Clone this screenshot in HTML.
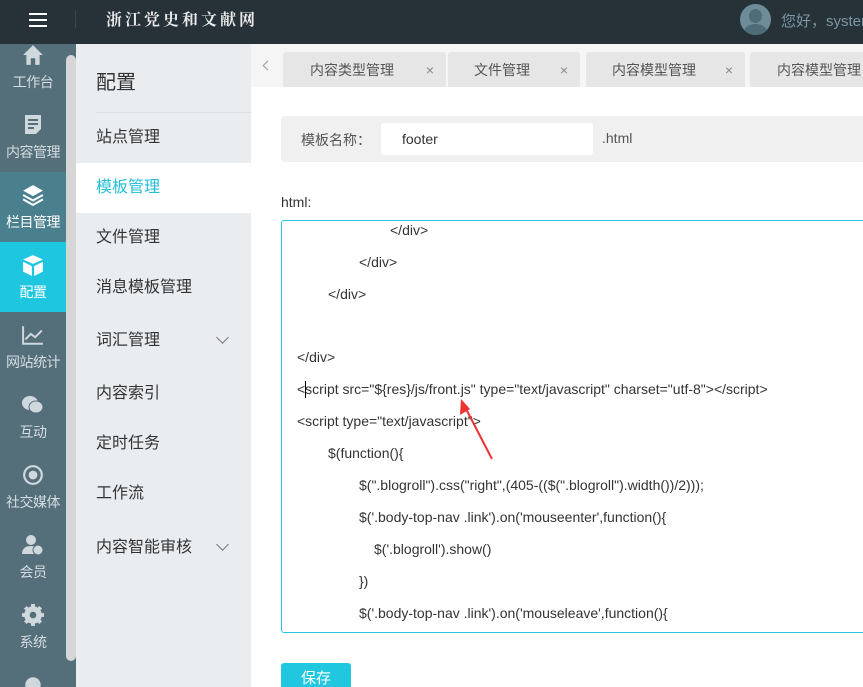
<!DOCTYPE html>
<html style="width:863px;height:687px;overflow:hidden"><head><meta charset="utf-8"><style>
*{margin:0;padding:0;box-sizing:border-box}
body{width:863px;height:687px;overflow:hidden;position:relative;background:#fff;font-family:"Liberation Sans","Noto Sans CJK SC",sans-serif}
#w{position:absolute;left:0;top:0;width:863px;height:687px;overflow:hidden}
.top{position:absolute;left:0;top:0;width:863px;height:44px;background:#263238;overflow:hidden}
.side{position:absolute;left:0;top:44px;width:76px;height:643px;background:#546e7a;overflow:hidden}
.thumb{position:absolute;left:66px;top:55px;width:10px;height:606px;background:#d6d6d6;border-radius:5px}
.it{position:absolute;left:0;width:66px;height:70px;color:#d5dde1;font-size:14px;text-align:center}
.it span{position:absolute;left:0;right:0;top:40px;white-space:nowrap;letter-spacing:-0.5px}
.it svg{position:absolute;left:22px;top:12px;width:22px;height:22px}
.menu{position:absolute;left:76px;top:44px;width:175px;height:643px;background:#eaedf0}
.menu .h{position:absolute;left:20px;top:22px;font-size:20px;color:#333}
.menu .ln{position:absolute;left:19px;top:68px;width:156px;height:1px;background:#dde1e4}
.mi{position:absolute;left:0;width:175px;height:50px;line-height:50px;padding-left:20px;font-size:16px;color:#333}
.mi i{position:absolute;right:24px;top:17px;width:9px;height:9px;border-right:1.3px solid #777;border-bottom:1.3px solid #777;transform:rotate(45deg)}
.tabs{position:absolute;left:251px;top:44px;width:612px;height:43px;background:#f5f5f5;overflow:hidden}
.tab{position:absolute;top:8px;height:35px;background:#e6e6e6;border-radius:3px 3px 0 0;font-size:14px;color:#555;line-height:36px}
.tab b{position:absolute;right:12px;top:0;font-weight:normal;color:#888;font-size:14px}
.main{position:absolute;left:251px;top:87px;width:612px;height:600px;overflow:hidden}
.code div{position:absolute;font-size:14px;color:#333;white-space:nowrap}
</style></head><body><div id="w">
<div class="top">
 <div style="position:absolute;left:29px;top:13px;width:18px;height:2px;background:#fff;box-shadow:0 6px 0 #fff,0 12px 0 #fff"></div>
 <div style="position:absolute;left:75px;top:10px;width:1px;height:18px;background:#3a464d"></div>
 <div style="position:absolute;left:106px;top:7px;font-family:'Noto Serif CJK SC',serif;font-weight:bold;color:#e8e8e8;font-size:16px;letter-spacing:3px">浙江党史和文献网</div>
 <div style="position:absolute;left:740px;top:4px;width:31px;height:31px;border-radius:50%;background:#6e8b98;overflow:hidden"><div style="position:absolute;left:9px;top:5px;width:13px;height:14px;border-radius:50%;background:#4e6b78"></div><div style="position:absolute;left:4px;top:20px;width:23px;height:16px;border-radius:50% 50% 0 0;background:#4e6b78"></div></div>
 <div style="position:absolute;left:781px;top:10px;color:#7d96a2;font-size:15px;white-space:nowrap">您好，system</div>
</div>
<div class="side">
 <div class="it" style="top:-12px"><svg viewBox="0 0 20 20"><path d="M10 1L1 10h3v9h4v-6h4v6h4v-9h3z" fill="#cfd8dc"/></svg><span>工作台</span></div>
 <div class="it" style="top:58px"><svg viewBox="0 0 20 22"><path d="M2 1h16v14l-5 5H2z" fill="#cfd8dc"/><path d="M5 6h10M5 10h10M5 14h6" stroke="#546e7a" stroke-width="2"/></svg><span>内容管理</span></div>
 <div class="it" style="top:128px;background:#4a7f8e"><svg viewBox="0 0 20 20"><path d="M10 1l9 5-9 5-9-5z" fill="#fff"/><path d="M1 10l9 5 9-5M1 14l9 5 9-5" stroke="#fff" stroke-width="1.8" fill="none"/></svg><span style="color:#fff">栏目管理</span></div>
 <div class="it" style="top:198px;background:#1ec6e0"><svg viewBox="0 0 20 20"><path d="M10 1l9 4-9 4-9-4z" fill="#fff"/><path d="M1 7l8 4v9l-8-4zM19 7l-8 4v9l8-4z" fill="#fff"/></svg><span style="color:#fff">配置</span></div>
 <div class="it" style="top:268px"><svg viewBox="0 0 20 20"><path d="M1 2v16h18M3 14l5-5 4 3 6-6" stroke="#cfd8dc" stroke-width="1.8" fill="none"/></svg><span>网站统计</span></div>
 <div class="it" style="top:338px"><svg viewBox="0 0 22 20"><ellipse cx="8" cy="8" rx="8" ry="7" fill="#cfd8dc"/><ellipse cx="14" cy="12" rx="7" ry="6" fill="#cfd8dc" stroke="#546e7a"/></svg><span>互动</span></div>
 <div class="it" style="top:408px"><svg viewBox="0 0 20 20"><circle cx="10" cy="10" r="8" stroke="#cfd8dc" stroke-width="2" fill="none"/><circle cx="10" cy="10" r="4" fill="#cfd8dc"/></svg><span>社交媒体</span></div>
 <div class="it" style="top:478px"><svg viewBox="0 0 22 22"><circle cx="9" cy="6" r="5" fill="#cfd8dc"/><path d="M0 20c0-6 4-8 9-8s7 2 7 4v4z" fill="#cfd8dc"/><circle cx="16" cy="16" r="5" fill="#cfd8dc" stroke="#546e7a"/></svg><span>会员</span></div>
 <div class="it" style="top:548px"><svg viewBox="0 0 20 20"><circle cx="10" cy="10" r="6" fill="none" stroke="#cfd8dc" stroke-width="4"/><path d="M10 0v20M0 10h20M3 3l14 14M17 3L3 17" stroke="#cfd8dc" stroke-width="3.5"/><circle cx="10" cy="10" r="3" fill="#546e7a"/></svg><span>系统</span></div>
 <div class="it" style="top:618px;height:25px;overflow:hidden"><svg viewBox="0 0 20 20"><circle cx="10" cy="10" r="7" fill="#cfd8dc"/></svg></div>
</div>
<div class="thumb"></div>
<div class="menu">
 <div class="h">配置</div><div class="ln"></div>
 <div class="mi" style="top:69px">站点管理</div>
 <div class="mi" style="top:119px;background:#fff;color:#23bfd9">模板管理</div>
 <div class="mi" style="top:169px">文件管理</div>
 <div class="mi" style="top:219px">消息模板管理</div>
 <div class="mi" style="top:272px">词汇管理<i></i></div>
 <div class="mi" style="top:325px">内容索引</div>
 <div class="mi" style="top:375px">定时任务</div>
 <div class="mi" style="top:425px">工作流</div>
 <div class="mi" style="top:479px">内容智能审核<i></i></div>
</div>
<div class="tabs">
 <div style="position:absolute;left:13px;top:18px;width:7px;height:7px;border-left:1px solid #999;border-bottom:1px solid #999;transform:rotate(45deg)"></div>
 <div class="tab" style="left:32px;width:163px;padding-left:27px">内容类型管理<b>×</b></div>
 <div class="tab" style="left:197px;width:132px;padding-left:26px">文件管理<b>×</b></div>
 <div class="tab" style="left:335px;width:159px;padding-left:26px">内容模型管理<b>×</b></div>
 <div class="tab" style="left:499px;width:113px;padding-left:27px;white-space:nowrap;overflow:hidden;border-radius:3px 0 0 0">内容模型管理</div>
</div>
<div class="main">
<div style="position:absolute;left:30px;top:29px;width:590px;height:46px;background:#f0f0f0;border-radius:4px"></div>
<div style="position:absolute;left:50px;top:43px;font-size:14px;color:#555">模板名称：</div>
<div style="position:absolute;left:130px;top:36px;width:212px;height:32px;background:#fff;border-radius:3px;font-size:14px;color:#333;padding:8px 0 0 21px">footer</div>
<div style="position:absolute;left:351px;top:43px;font-size:14px;color:#555">.html</div>
<div style="position:absolute;left:30px;top:107px;font-size:14px;color:#333">html:</div>
<div style="position:absolute;left:30px;top:133px;width:600px;height:413px;border:1px solid #23c6de;border-radius:3px"></div>
<div class="code">
 <div style="left:139px;top:135px">&lt;/div&gt;</div>
 <div style="left:108px;top:167px">&lt;/div&gt;</div>
 <div style="left:77px;top:199px">&lt;/div&gt;</div>
 <div style="left:46px;top:262px">&lt;/div&gt;</div>
 <div style="left:46px;top:294px">&lt;script src="${res}/js/front.js" type="text/javascript" charset="utf-8"&gt;&lt;/script&gt;</div>
 <div style="left:54px;top:294px;width:1px;height:17px;background:#000"></div>
 <div style="left:46px;top:326px">&lt;script type="text/javascript"&gt;</div>
 <div style="left:77px;top:358px">$(function(){</div>
 <div style="left:108px;top:390px">$(".blogroll").css("right",(405-(($(".blogroll").width())/2)));</div>
 <div style="left:108px;top:422px">$('.body-top-nav .link').on('mouseenter',function(){</div>
 <div style="left:123px;top:454px">$('.blogroll').show()</div>
 <div style="left:108px;top:486px">})</div>
 <div style="left:108px;top:518px">$('.body-top-nav .link').on('mouseleave',function(){</div>
</div>
<svg style="position:absolute;left:199px;top:308px" width="50" height="70"><path d="M42 64L14 10" stroke="#ee3333" stroke-width="2"/><path d="M11 4l-1 16 10-6z" fill="#ee3333"/></svg>
<div style="position:absolute;left:30px;top:576px;width:70px;height:24px;overflow:hidden;background:#21c6df;border-radius:3px 3px 0 0;color:#fff;font-size:15px;text-align:center;line-height:32px">保存</div>
</div>
</div></body></html>
